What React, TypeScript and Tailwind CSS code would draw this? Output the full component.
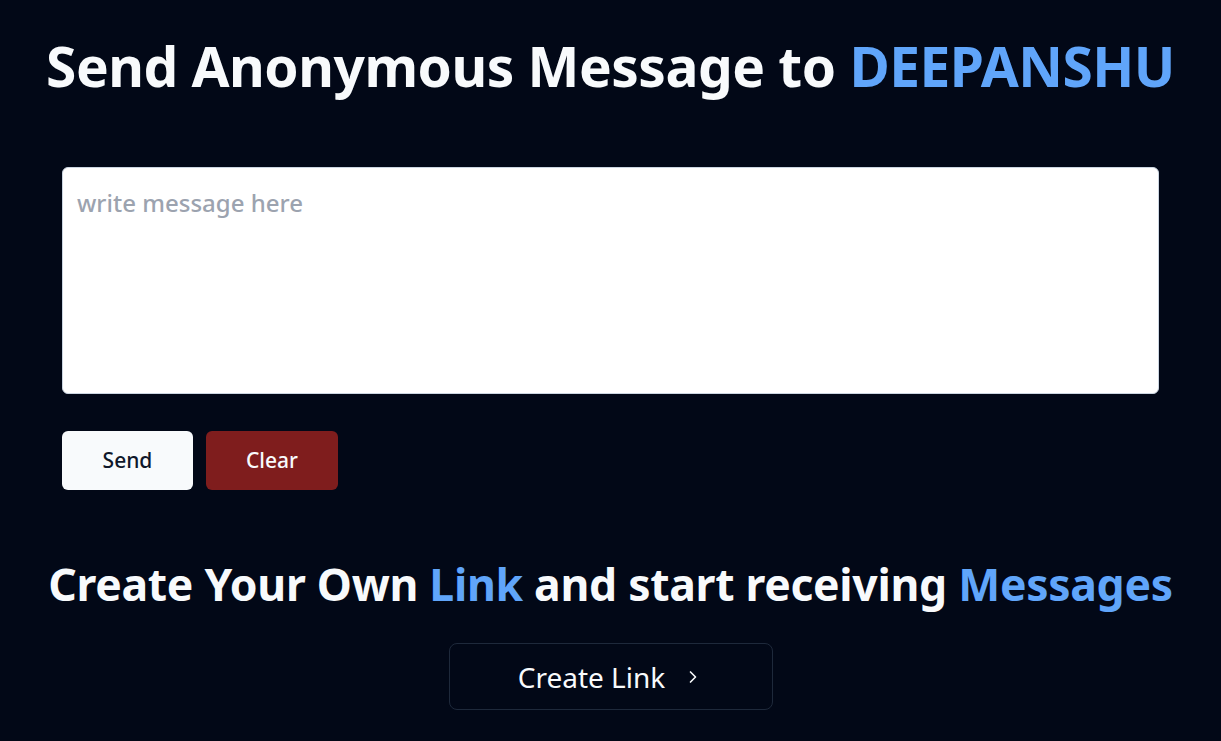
import React from "react";

export default function App() {
  return (
    <div
      className="min-h-screen w-full bg-[#020817] text-[#f8fafc] flex flex-col items-center"
      style={{ fontFamily: '"Noto Sans", "Open Sans", sans-serif' }}
    >
      <h1 className="mt-[26px] text-[55px] leading-[80px] font-bold tracking-[-0.5px] text-center">
        Send Anonymous Message to <span className="text-[#60a5fa]">DEEPANSHU</span>
      </h1>
      <div className="w-[1097px] mt-[61px]">
        <textarea
          placeholder="write message here"
          className="block w-full h-[227px] rounded-md border border-[#cbd5e1] bg-white px-[14px] py-[20px] text-[24px] leading-[30px] font-medium text-[#0f172a] placeholder:text-[#9ca3af] resize-none outline-none"
        />
        <div className="flex gap-[13px] mt-[37px]">
          <button className="w-[131px] h-[59px] rounded-md bg-[#f8fafc] text-[#0f172a] text-[21px] font-medium">Send</button>
          <button className="w-[132px] h-[59px] rounded-md bg-[#7f1d1d] text-[#f8fafc] text-[21px] font-medium">Clear</button>
        </div>
      </div>
      <h2 className="mt-[64px] text-[44.5px] leading-[60px] font-bold tracking-[-0.3px] text-center">
        Create Your Own <span className="text-[#60a5fa]">Link</span> and start receiving{" "}
        <span className="text-[#60a5fa]">Messages</span>
      </h2>
      <button className="mt-[29px] w-[324px] h-[67px] rounded-lg border border-[#1e293b] flex items-center justify-center gap-[18px] text-[28px]">
        Create Link
        <svg width="20" height="20" viewBox="0 0 24 24" fill="none" stroke="currentColor" strokeWidth="2" strokeLinecap="round" strokeLinejoin="round">
          <path d="m9 18 6-6-6-6" />
        </svg>
      </button>
    </div>
  );
}
